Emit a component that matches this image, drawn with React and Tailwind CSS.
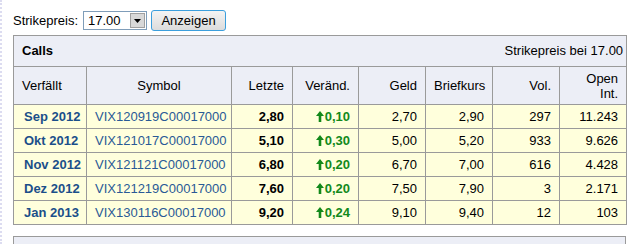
const rows = [
  { d: "Sep 2012", s: "VIX120919C00017000", l: "2,80", c: "0,10", g: "2,70", b: "2,90", v: "297", o: "11.243" },
  { d: "Okt 2012", s: "VIX121017C00017000", l: "5,10", c: "0,30", g: "5,00", b: "5,20", v: "933", o: "9.626" },
  { d: "Nov 2012", s: "VIX121121C00017000", l: "6,80", c: "0,20", g: "6,70", b: "7,00", v: "616", o: "4.428" },
  { d: "Dez 2012", s: "VIX121219C00017000", l: "7,60", c: "0,20", g: "7,50", b: "7,90", v: "3", o: "2.171" },
  { d: "Jan 2013", s: "VIX130116C00017000", l: "9,20", c: "0,24", g: "9,10", b: "9,40", v: "12", o: "103" },
];

const UpArrow = () => (
  <svg width="8" height="11" viewBox="0 0 8 11" className="inline-block mr-[1px] -mt-[2px] align-middle">
    <path d="M4 0 L8 5 L5.3 5 L5.3 11 L2.7 11 L2.7 5 L0 5 Z" fill="#12891a" />
  </svg>
);

const th = "border border-[#9a9a9a] font-normal px-[8px] align-middle whitespace-nowrap";
const td = "border border-[#9a9a9a] px-[8px] h-[24px] align-middle whitespace-nowrap";

export default function App() {
  return (
    <div className="w-[641px] h-[244px] bg-white overflow-hidden border-l-2 border-dotted border-[#dcdcf0] pl-[11px] font-['Liberation_Sans',Arial,sans-serif] text-[13px] text-black">
      <div className="flex items-center h-[21px] mt-[10px]">
        <span className="mr-[5px]">Strikepreis:</span>
        <div className="flex items-center w-[64px] h-[19px] border border-[#7f9db9] bg-white">
          <span className="flex-1 pl-[4px] leading-none">17.00</span>
          <div className="w-[15px] h-[15px] mr-[1px] bg-[#d8d8d8] border border-[#a0a0a0] flex items-center justify-center">
            <svg width="7" height="4" viewBox="0 0 7 4"><path d="M0 0 L7 0 L3.5 4 Z" fill="#000" /></svg>
          </div>
        </div>
        <button className="ml-[4px] h-[21px] w-[75px] rounded-[3px] border border-[#3c9fdd] bg-gradient-to-b from-[#f4f4f4] to-[#dcdcdc] text-[13px] leading-none">
          Anzeigen
        </button>
      </div>

      <table className="mt-[4px] w-[613px] border-collapse border border-[#9a9a9a] table-fixed">
        <colgroup>
          <col className="w-[73px]" />
          <col className="w-[145px]" />
          <col className="w-[61px]" />
          <col className="w-[66px]" />
          <col className="w-[67px]" />
          <col className="w-[67px]" />
          <col className="w-[67px]" />
          <col className="w-[67px]" />
        </colgroup>
        <thead>
          <tr className="bg-[#eceef6] h-[31px]">
            <th colSpan={8} className="border border-[#9a9a9a] pl-[8px] pr-[3px]">
              <div className="flex items-center justify-between">
                <span className="font-bold">Calls</span>
                <span className="font-normal">Strikepreis bei 17.00</span>
              </div>
            </th>
          </tr>
          <tr className="bg-[#eceef6] h-[38px] leading-[15px]">
            <th className={`${th} text-left`}>Verfällt</th>
            <th className={`${th} text-center`}>Symbol</th>
            <th className={`${th} text-right`}>Letzte</th>
            <th className={`${th} text-right`}>Veränd.</th>
            <th className={`${th} text-right`}>Geld</th>
            <th className={`${th} text-center`}>Briefkurs</th>
            <th className={`${th} text-right`}>Vol.</th>
            <th className={`${th} text-right`}>Open<br />Int.</th>
          </tr>
        </thead>
        <tbody>
          {rows.map((r) => (
            <tr key={r.s} className="bg-[#ffffdc]">
              <td className={`${td} text-left font-bold text-[#1b4f8a] pl-[10px]`}>{r.d}</td>
              <td className={`${td} text-center text-[#2a5a96]`}>{r.s}</td>
              <td className={`${td} text-right font-bold`}>{r.l}</td>
              <td className={`${td} text-right font-bold text-[#12891a]`}><UpArrow />{r.c}</td>
              <td className={`${td} text-right`}>{r.g}</td>
              <td className={`${td} text-right`}>{r.b}</td>
              <td className={`${td} text-right`}>{r.v}</td>
              <td className={`${td} text-right`}>{r.o}</td>
            </tr>
          ))}
        </tbody>
      </table>

      <div className="mt-[11px] w-[613px] h-[20px] border border-[#9a9a9a] bg-[#eceef6]" />
    </div>
  );
}
